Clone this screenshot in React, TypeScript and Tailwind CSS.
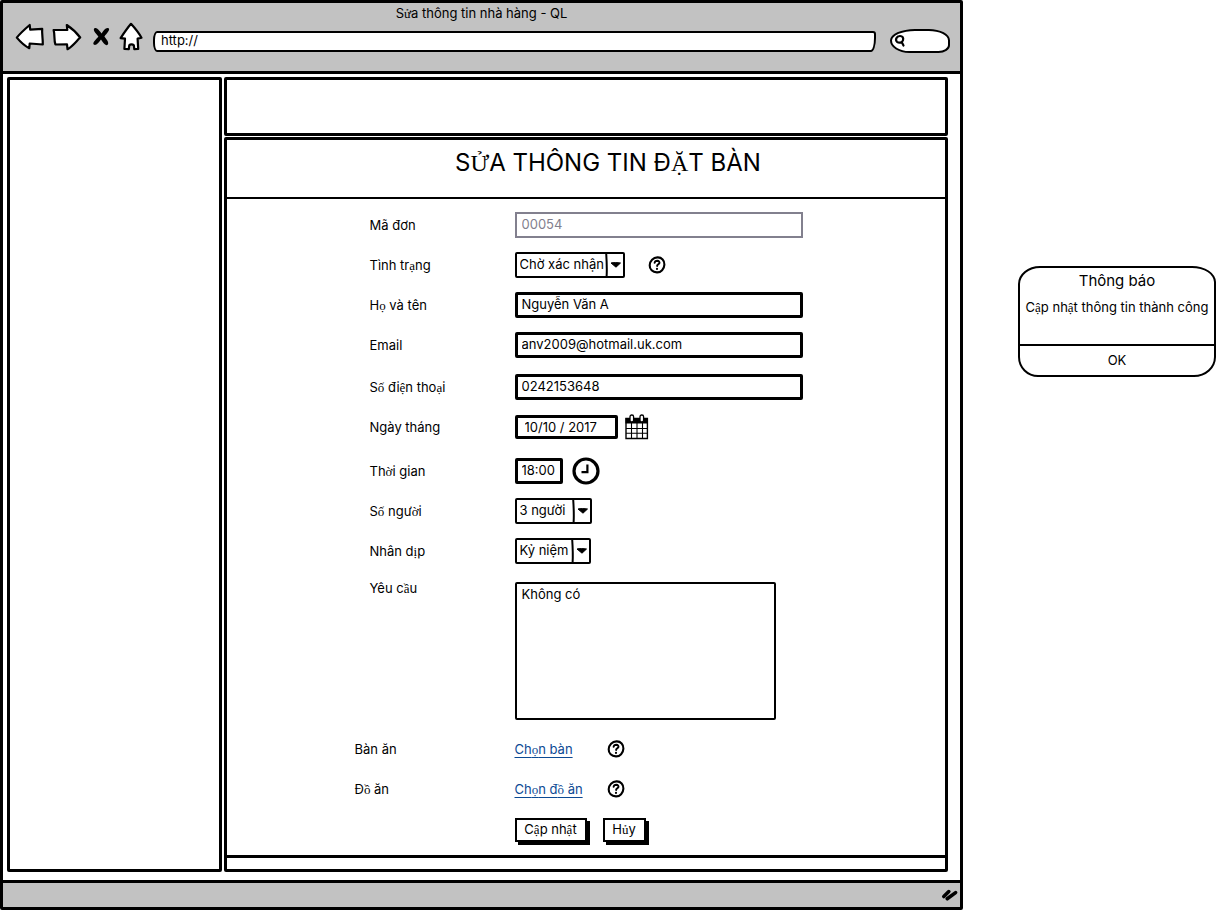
import { Fragment, type ReactNode } from "react";

/** Text whose stacked Vietnamese letters are set in the serif companion face. */
function Vn({ children }: { children: string }) {
  return (
    <>
      {children.split(/([\u1EA0-\u1EF9]+)/).map((part, i) =>
        i % 2 ? (
          <span key={i} className="font-['Liberation_Serif',serif] leading-none">
            {part}
          </span>
        ) : (
          <Fragment key={i}>{part}</Fragment>
        ),
      )}
    </>
  );
}

const field = "h-[26px] border-[3px] border-black rounded-[2px] bg-white pl-1 pb-0.5 text-[13px] outline-none";

function HelpButton() {
  return (
    <button type="button" aria-label="?" className="shrink-0">
      <svg width="18" height="18" viewBox="0 0 18 18" fill="none" stroke="#000" strokeLinecap="round">
        <path d="M9.5 1.4C13.7 1.2 16.7 4.6 16.4 8.6C16.2 13 13 16.6 8.9 16.4C4.6 16.3 1.5 13.2 1.7 9.2C1.9 4.8 5.2 1.6 9.5 1.4Z" strokeWidth="2.1" />
        <path d="M6.6 6.9C6.8 5.4 7.8 4.8 9.3 4.8C11 4.9 11.8 5.9 11.4 7.1C11 8.3 9.3 8.5 9.1 10" strokeWidth="1.9" />
        <path d="M9 12.8v.2" strokeWidth="2.1" />
      </svg>
    </button>
  );
}

function Row({ label, id, outdent, children }: { label: string; id: string; outdent?: boolean; children: ReactNode }) {
  return (
    <div className="flex min-h-[26px] items-center">
      <label htmlFor={id} className={outdent ? "-ml-[15px] w-40 shrink-0" : "w-[145px] shrink-0"}>
        <Vn>{label}</Vn>
      </label>
      {children}
    </div>
  );
}

function Combo({ id, value, width }: { id: string; value: string; width: string }) {
  return (
    <div className={`relative ${width}`}>
      <select id={id} className="block h-[26px] w-full appearance-none rounded-[2px] border-2 border-black bg-white pb-0.5 pl-[3px] text-[13px] outline-none">
        <option>{value}</option>
      </select>
      <svg className="pointer-events-none absolute top-0 right-0" width="20" height="26" viewBox="0 0 20 26">
        <path d="M1.2 1.5C1.7 9 2.1 17 1.6 24.5" fill="none" stroke="#000" strokeWidth="2" />
        <path d="M6 11C8.5 10.4 12.5 10.6 15.5 11L11 15.2Z" stroke="#000" strokeLinejoin="round" />
      </svg>
    </div>
  );
}

function CalendarIcon() {
  return (
    <svg width="24" height="26" viewBox="0 0 24 26">
      <path d="M1 4.5H22.4V24.5H1Z" fill="#fff" stroke="#000" strokeWidth="1.4" />
      <path d="M.5 4H23V9.5H.5Z" />
      <path d="M1 14.5H22.5M1 19.3H22.5M6.5 9V24.5M12 9V24.5M17.5 9V24.5" stroke="#000" strokeWidth="1.1" />
      <rect x="5" y="1" width="3.6" height="7" rx="1.7" fill="#fff" stroke="#000" strokeWidth="1.3" />
      <rect x="15" y="1" width="3.6" height="7" rx="1.7" fill="#fff" stroke="#000" strokeWidth="1.3" />
    </svg>
  );
}

function ClockIcon() {
  return (
    <svg width="28" height="28" viewBox="0 0 28 28" fill="none" stroke="#000">
      <circle cx="14" cy="14" r="12" strokeWidth="3.2" />
      <path d="M15.4 7.5V15.2H9.5" strokeWidth="2.2" />
    </svg>
  );
}

function Toolbar() {
  return (
    <div className="-mt-0.5 flex items-center pr-2.5 pl-3">
      <button type="button" aria-label="Back" className="shrink-0">
        <svg width="30" height="28" viewBox="0 0 30 28" fill="#fff" stroke="#000" strokeWidth="2.2" strokeLinejoin="round">
          <path d="M1.8 14.6C5.5 10 10 6 14.7 2L15.2 6.7L27.2 5.8C26.7 11 28 16 27.8 21.5L14.7 20.5L14.3 25.2C9 22.5 5.5 19 1.8 14.6Z" />
        </svg>
      </button>
      <button type="button" aria-label="Forward" className="ml-1.5 shrink-0">
        <svg width="32" height="28" viewBox="0 0 32 28" fill="#fff" stroke="#000" strokeWidth="2.2" strokeLinejoin="round">
          <path d="M2.6 7L16.3 7L15.8 2C21 5.5 25.5 9.5 29.2 14.5C25 18.5 21.5 23.5 16.5 26.2L16 21.3L4.4 21.5C2.8 17 4 11.5 2.6 7Z" />
        </svg>
      </button>
      <button type="button" aria-label="Stop" className="ml-2 shrink-0">
        <svg width="20" height="24" viewBox="0 0 20 24">
          <path d="M3.2 3.4C5.6 1.6 8 5 10.6 8.6C12.6 5.4 14.6 2.2 17.6 3.2C19.6 4.6 15.6 8.6 13.4 11.4C16 14.8 18.2 17.6 16.8 19.6C14.4 21.6 12.2 17.6 10 14.6C7.6 17.8 5 21 2.8 19.6C1 17.6 5 14.4 7.4 11.4C4.6 8 1.8 5.4 3.2 3.4Z" />
        </svg>
      </button>
      <button type="button" aria-label="Home" className="ml-2 shrink-0">
        <svg width="24" height="30" viewBox="0 0 24 30" fill="#fff" stroke="#000" strokeWidth="2.2" strokeLinejoin="round">
          <path d="M12 1.8C15.8 6 19.6 10.6 22.5 15.7L18.6 16.6L19.2 27L15.3 27.2L14.8 23.2C13.7 22 11.3 22 10.3 23.2L9.8 27.2L5.4 27L6 16.7L1.6 16.1C5 11 8.4 6 12 1.8Z" />
        </svg>
      </button>
      <input aria-label="Address" defaultValue="http://" className="mt-2 ml-2.5 h-[21px] min-w-0 flex-1 rounded-[4px_3px_5px_4px/9px_3px_14px_9px] border-2 border-black bg-white pb-0.5 pl-1.5 text-[13px] outline-none" />
      <label className="mt-2 ml-3.5 flex h-6 w-[60px] shrink-0 items-center rounded-[26px_22px_12px_20px/12px_12px_8px_13px] border-2 border-black bg-white pl-0.5">
        <svg width="12" height="14" viewBox="0 0 12 14" fill="none" stroke="#000" strokeWidth="2.2" strokeLinecap="round">
          <path d="M5.8 2C8.5 1.8 9.7 4 9 6.3C8.2 9 5 9.3 3 7.8C1 6 2.4 2.2 5.8 2ZM7.8 8.2L9.5 11.5" />
        </svg>
        <input aria-label="Search" className="w-8 bg-transparent outline-none" />
      </label>
    </div>
  );
}

export default function App() {
  return (
    <div className="flex min-h-screen bg-white font-[Inter,'Noto_Sans',sans-serif] text-[13px] leading-5 text-black">
      <div className="flex min-w-0 flex-1 flex-col rounded-[2px] border-[3px] border-black">
        <header className="h-[71px] shrink-0 border-b-[3px] border-black bg-[#c2c2c2]">
          <h1 className="text-center">
            <Vn>Sửa thông tin nhà hàng - QL</Vn>
          </h1>
          <Toolbar />
        </header>

        <div className="flex flex-1 gap-0.5 pt-[3px] pr-3 pb-2 pl-1">
          <aside className="w-[215px] shrink-0 rounded-[2px] border-[3px] border-black" />
          <main className="flex min-w-0 flex-1 flex-col">
            <div className="h-[59px] shrink-0 rounded-[2px] border-[3px] border-black" />
            <div className="mt-px flex flex-1 flex-col rounded-[2px] border-[3px] border-black">
              <div className="h-[59px] shrink-0 border-b-2 border-black pt-[7px] pl-11">
                <h2 className="text-center text-2xl">
                  <Vn>SỬA THÔNG TIN ĐẶT BÀN</Vn>
                </h2>
              </div>

              <form className="mx-auto flex w-[433px] flex-1 flex-col pt-[13px]" onSubmit={(e) => e.preventDefault()}>
                <div className="flex flex-col gap-3.5">
                  <Row label="Mã đơn" id="code">
                    <input id="code" disabled defaultValue="00054" className="h-[26px] min-w-0 flex-1 border-2 border-[#82808e] bg-white pb-0.5 pl-[5px] text-[13px] text-[#82808e]" />
                  </Row>
                  <Row label="Tình trạng" id="status">
                    <Combo id="status" value="Chờ xác nhận" width="w-[110px] mr-[23px]" />
                    <HelpButton />
                  </Row>
                  <Row label="Họ và tên" id="name">
                    <input id="name" defaultValue="Nguyễn Văn A" className={`min-w-0 flex-1 ${field}`} />
                  </Row>
                  <Row label="Email" id="email">
                    <input id="email" defaultValue="anv2009@hotmail.uk.com" className={`min-w-0 flex-1 ${field}`} />
                  </Row>
                </div>

                <div className="mt-4 flex flex-col gap-3.5">
                  <Row label="Số điện thoại" id="phone">
                    <input id="phone" defaultValue="0242153648" className={`min-w-0 flex-1 ${field}`} />
                  </Row>
                  <Row label="Ngày tháng" id="date">
                    <input id="date" defaultValue="10/10 / 2017" className="mr-[7px] h-6 w-[103px] rounded-[2px] border-[3px] border-black bg-white pl-[7px] text-[13px] outline-none" />
                    <CalendarIcon />
                  </Row>
                </div>

                <div className="mt-[18px] flex flex-col gap-3.5">
                  <Row label="Thời gian" id="time">
                    <input id="time" defaultValue="18:00" className={`mr-[9px] w-12 ${field}`} />
                    <div className="flex h-[26px] items-center">
                      <ClockIcon />
                    </div>
                  </Row>
                  <Row label="Số người" id="people">
                    <Combo id="people" value="3 người" width="w-[77px]" />
                  </Row>
                  <Row label="Nhân dịp" id="occasion">
                    <Combo id="occasion" value="Kỷ niệm" width="w-[76px]" />
                  </Row>
                </div>

                <div className="mt-[18px] flex">
                  <label htmlFor="request" className="-mt-1 w-[145px] shrink-0">
                    <Vn>Yêu cầu</Vn>
                  </label>
                  <textarea id="request" defaultValue="Không có" className="block h-[138px] w-[261px] resize-none rounded-[2px] border-2 border-black bg-white px-[5px] text-[13px] leading-5 outline-none" />
                </div>

                <div className="mt-4 flex flex-col gap-3.5">
                  <Row label="Bàn ăn" id="table" outdent>
                    <div className="w-[92px]">
                      <a id="table" href="#table" className="text-[#0c4a94] underline underline-offset-3">
                        <Vn>Chọn bàn</Vn>
                      </a>
                    </div>
                    <HelpButton />
                  </Row>
                  <Row label="Đồ ăn" id="food" outdent>
                    <div className="w-[92px]">
                      <a id="food" href="#food" className="text-[#0c4a94] underline underline-offset-3">
                        <Vn>Chọn đồ ăn</Vn>
                      </a>
                    </div>
                    <HelpButton />
                  </Row>
                </div>

                <div className="mt-4 mb-3 ml-[145px] flex gap-4">
                  <button type="submit" className="h-6 w-[72px] border-2 border-black bg-white pb-0.5 leading-4 shadow-[3px_3px_0_#000]">
                    <Vn>Cập nhật</Vn>
                  </button>
                  <button type="reset" className="h-6 w-[43px] border-2 border-black bg-white pb-0.5 leading-4 shadow-[3px_3px_0_#000]">
                    <Vn>Hủy</Vn>
                  </button>
                </div>
              </form>
              <div className="h-3.5 shrink-0 border-t-[3px] border-black" />
            </div>
          </main>
        </div>

        <footer className="flex h-[27px] shrink-0 items-center justify-end border-t-[3px] border-black bg-[#c2c2c2] pr-px">
          <svg width="18" height="16" viewBox="0 0 18 16" fill="none" stroke="#000" strokeLinecap="round">
            <path d="M2.8 9.6L7.8 4.6M6.2 11.8L14.6 5.6" strokeWidth="3.6" />
          </svg>
        </footer>
      </div>

      <div className="w-[254px] shrink-0 pt-[266px] pr-px pl-[55px]">
        <section role="dialog" aria-labelledby="notice" className="overflow-hidden rounded-[22px_24px_22px_20px/18px_16px_20px_20px] border-2 border-black bg-white text-center">
          <h3 id="notice" className="pt-[3px] text-[15px]">
            Thông báo
          </h3>
          <p className="mt-1.5 h-[47px] whitespace-nowrap">
            <Vn>Cập nhật thông tin thành công</Vn>
          </p>
          <button type="button" className="h-[31px] w-full border-t-2 border-black pb-0.5">
            OK
          </button>
        </section>
      </div>
    </div>
  );
}
